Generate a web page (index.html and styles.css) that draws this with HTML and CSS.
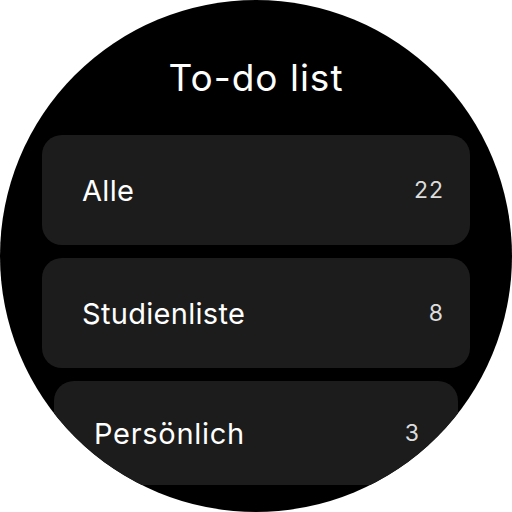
FILE: index.html
```html
<!DOCTYPE html>
<html lang="de">
<head>
<meta charset="utf-8">
<title>To-do list</title>
<link rel="stylesheet" href="styles.css">
</head>
<body>
<div class="watch">
  <h1 class="title">To-do list</h1>
  <ul class="lists">
    <li class="card"><span class="name">Alle</span><span class="count">22</span></li>
    <li class="card"><span class="name">Studienliste</span><span class="count">8</span></li>
    <li class="card card-edge"><span class="name">Persönlich</span><span class="count">3</span></li>
  </ul>
</div>
</body>
</html>
```
FILE: styles.css
```css
html, body {
  margin: 0;
  padding: 0;
  background: #ffffff;
}
body {
  font-family: Inter, "Open Sans", sans-serif;
}
.watch {
  width: 512px;
  height: 512px;
  border-radius: 50%;
  background: #000000;
  overflow: hidden;
  display: flex;
  flex-direction: column;
  align-items: stretch;
  padding-top: 56px;
  box-sizing: border-box;
}
.title {
  margin: 0;
  font-size: 37px;
  line-height: 44px;
  font-weight: 400;
  letter-spacing: 1px;
  color: #ffffff;
  text-align: center;
}
.lists {
  list-style: none;
  margin: 35px 0 0 0;
  padding: 0 42px;
  display: flex;
  flex-direction: column;
  gap: 13px;
}
.card {
  height: 110px;
  flex: none;
  background: #1c1c1c;
  border-radius: 20px;
  display: flex;
  align-items: center;
  justify-content: space-between;
  padding: 0 26px 0 40px;
  box-sizing: border-box;
}
.card-edge {
  height: 104px;
  margin: 0 12px;
  padding: 0 38px 0 40px;
}
.name {
  font-size: 29px;
  letter-spacing: 0.3px;
  color: #ffffff;
}
.card-edge .name {
  letter-spacing: 0.7px;
}
.count {
  font-size: 23px;
  letter-spacing: 1px;
  color: #dcdcdc;
}
```
